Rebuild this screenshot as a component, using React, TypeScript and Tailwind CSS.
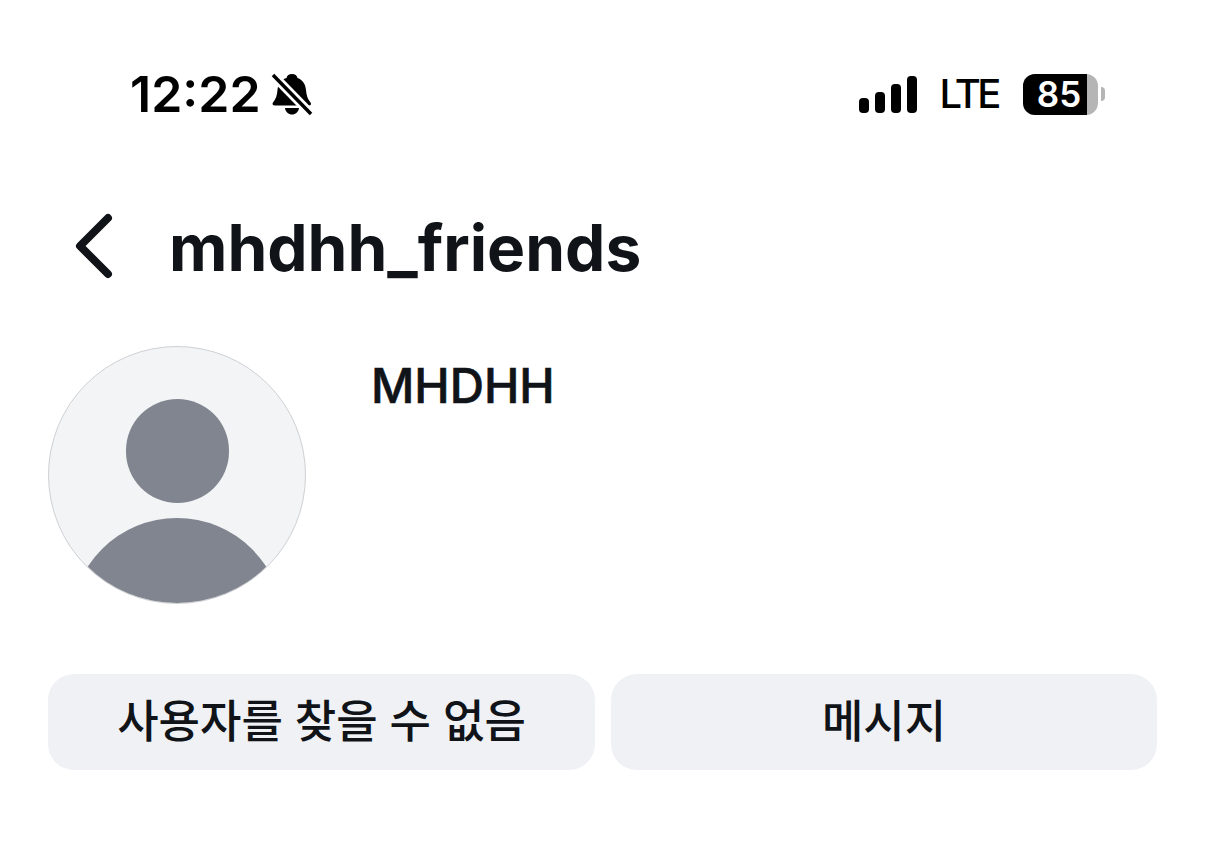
import { ChevronLeft } from "lucide-react";

const inter = "font-['Inter','Noto_Sans_CJK_KR',sans-serif]";

function MutedBell() {
  return (
    <svg width="42" height="44" viewBox="0 0 42 44" className="block">
      <path d="M21 2c3 0 5 1.500 5.500 4 5.500 2 8 6.500 8.500 12 .5 5.500 1.500 9 4.500 12.500 1 1.500 .5 3-1.500 3H4c-2.500 0-3-1.500-2-3 3-3.500 4-7 4.500-12.500.5-5.500 3-10 9-12C16 3.500 18 2 21 2z" fill="#000" />
      <path d="M14 36h14c-.5 4-3.500 6.500-7 6.500S14.500 40 14 36z" fill="#000" />
      <path d="M1 2l39 40" stroke="#fff" strokeWidth="9" />
      <path d="M2 3l38 39" stroke="#000" strokeWidth="3.500" />
    </svg>
  );
}

function StatusBar() {
  return (
    <div className="flex h-[140px] items-center justify-between pl-[130px] pr-[101px] pt-[48px]">
      <div className="flex items-center gap-[10px]">
        <span className="text-[50px] leading-none font-semibold text-black">12:22</span>
        <MutedBell />
      </div>
      <div className="flex items-center">
        <div className="flex items-end gap-[6px]">
          <div className="h-[15px] w-[10px] rounded-[4px] bg-black" />
          <div className="h-[21px] w-[10px] rounded-[4px] bg-black" />
          <div className="h-[29px] w-[10px] rounded-[4px] bg-black" />
          <div className="h-[37px] w-[10px] rounded-[4px] bg-black" />
        </div>
        <span className="ml-[22px] text-[40px] leading-none font-medium tracking-[-3.500px] text-black">LTE</span>
        <div className="ml-[25px] flex items-center">
          <div className="flex h-[41px] w-[75px] overflow-hidden rounded-[12px] bg-[#b5b5b5]">
            <div className="flex w-[64px] items-center justify-center bg-black pl-[8px] text-[35px] leading-none font-semibold text-white">85</div>
          </div>
          <div className="ml-[3px] h-[14px] w-[4px] rounded-r-full bg-[#b5b5b5]" />
        </div>
      </div>
    </div>
  );
}

function Avatar() {
  return (
    <div className="relative size-[258px] shrink-0 overflow-hidden rounded-full border border-[#cfd0d3] bg-[#f3f4f6]">
      <div className="absolute top-[52px] left-[77px] h-[104px] w-[103px] rounded-full bg-[#80858f]" />
      <div className="absolute top-[171px] left-[22px] size-[212px] rounded-full bg-[#80858f]" />
    </div>
  );
}

export default function App() {
  return (
    <div className={`${inter} h-[861px] w-[1206px] overflow-hidden bg-white text-[#101318]`}>
      <StatusBar />
      <div className="mt-[73px] flex h-[70px] items-center pl-[38px]">
        <ChevronLeft size={112} strokeWidth={1.7} className="mb-[5px] shrink-0 text-[#101318]" />
        <h1 className="ml-[19px] text-[64px] leading-none font-bold">mhdhh_friends</h1>
      </div>
      <div className="mt-[63px] flex pl-[48px]">
        <Avatar />
        <div className="ml-[65px] pt-[16px] text-[47.500px] leading-none font-medium [-webkit-text-stroke:0.6px_#101318]">MHDHH</div>
      </div>
      <div className="mt-[70px] flex gap-[16px] px-[48px]">
        <button className="h-[96px] w-[547px] rounded-[26px] bg-[#eff1f5] text-[45px] font-medium text-[#101318]">사용자를 찾을 수 없음</button>
        <button className="h-[96px] w-[546px] rounded-[26px] bg-[#eff1f5] text-[45px] font-medium text-[#101318]">메시지</button>
      </div>
    </div>
  );
}
